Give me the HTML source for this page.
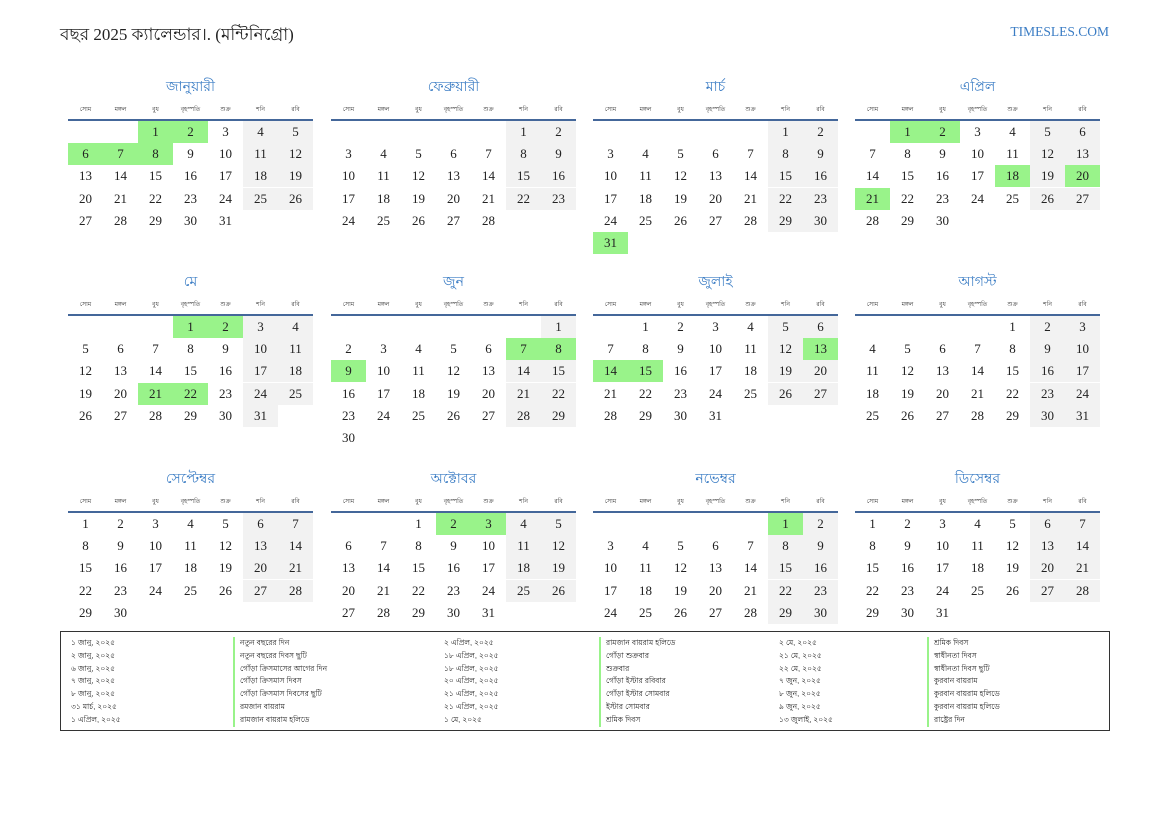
<!DOCTYPE html>
<html><head><meta charset="utf-8">
<style>
html,body{margin:0;padding:0;background:#fff;}
body{width:1169px;height:827px;position:relative;overflow:hidden;font-family:"Liberation Serif",serif;color:#222;}
.title{position:absolute;left:60px;top:22px;font-size:17px;color:#222;white-space:nowrap;}
.site{position:absolute;right:60px;top:24px;font-size:13.5px;color:#3a7cc4;}
.month{position:absolute;width:245px;}
.mname{position:absolute;left:0;width:245px;text-align:center;font-size:14px;color:#3a7cc4;font-family:"Liberation Sans",sans-serif;}
.wd{position:absolute;width:35px;text-align:center;font-size:6px;color:#333;font-family:"Liberation Sans",sans-serif;}
.line{position:absolute;left:0;width:245px;height:2px;background:#44679a;}
.c{position:absolute;width:35px;height:22px;line-height:22px;text-align:center;font-size:13px;}
.g{background:#f2f2f2;}
.h{background:#99f38a;}
.legend{position:absolute;left:60px;top:631px;width:1048px;height:98px;border:1.5px solid #333;font-family:"Liberation Sans",sans-serif;font-size:7.5px;color:#222;}
.lc{position:absolute;top:5px;line-height:12.8px;white-space:nowrap;}
.lb{border-left:2px solid #99f38a;padding-left:5px;}
</style></head><body>
<div class="title">বছর 2025 ক্যালেন্ডার।. (মন্টিনিগ্রো)</div>
<div class="site">TIMESLES.COM</div>
<div id="cal"></div>
<div class="legend">
<div class="lc" style="left:10px">১ জানু, ২০২৫<br>২ জানু, ২০২৫<br>৬ জানু, ২০২৫<br>৭ জানু, ২০২৫<br>৮ জানু, ২০২৫<br>৩১ মার্চ, ২০২৫<br>১ এপ্রিল, ২০২৫</div>
<div class="lc lb" style="left:172px">নতুন বছরের দিন<br>নতুন বছরের দিবস ছুটি<br>গোঁড়া ক্রিসমাসের আগের দিন<br>গোঁড়া ক্রিসমাস দিবস<br>গোঁড়া ক্রিসমাস দিবসের ছুটি<br>রমজান বায়রাম<br>রামজান বায়রাম হলিডে</div>
<div class="lc" style="left:383px">২ এপ্রিল, ২০২৫<br>১৮ এপ্রিল, ২০২৫<br>১৮ এপ্রিল, ২০২৫<br>২০ এপ্রিল, ২০২৫<br>২১ এপ্রিল, ২০২৫<br>২১ এপ্রিল, ২০২৫<br>১ মে, ২০২৫</div>
<div class="lc lb" style="left:538px">রামজান বায়রাম হলিডে<br>গোঁড়া শুক্রবার<br>শুক্রবার<br>গোঁড়া ইস্টার রবিবার<br>গোঁড়া ইস্টার সোমবার<br>ইস্টার সোমবার<br>শ্রমিক দিবস</div>
<div class="lc" style="left:718px">২ মে, ২০২৫<br>২১ মে, ২০২৫<br>২২ মে, ২০২৫<br>৭ জুন, ২০২৫<br>৮ জুন, ২০২৫<br>৯ জুন, ২০২৫<br>১৩ জুলাই, ২০২৫</div>
<div class="lc lb" style="left:866px">শ্রমিক দিবস<br>স্বাধীনতা দিবস<br>স্বাধীনতা দিবস ছুটি<br>কুরবান বায়রাম<br>কুরবান বায়রাম হলিডে<br>কুরবান বায়রাম হলিডে<br>রাষ্ট্রের দিন</div>
</div>
<script>
var names=["জানুয়ারী","ফেব্রুয়ারী","মার্চ","এপ্রিল","মে","জুন","জুলাই","আগস্ট","সেপ্টেম্বর","অক্টোবর","নভেম্বর","ডিসেম্বর"];
var wds=["সোম","মঙ্গল","বুধ","বৃহস্পতি","শুক্র","শনি","রবি"];
var start=[2,5,5,1,3,6,1,4,0,2,5,0];
var len=[31,28,31,30,31,30,31,31,30,31,30,31];
var hol={0:[1,2,6,7,8],2:[31],3:[1,2,18,20,21],4:[1,2,21,22],5:[7,8,9],6:[13,14,15],9:[2,3],10:[1]};
var xs=[68,331,593,855],lines=[120,315,512];
var h="";
for(var m=0;m<12;m++){
 var x=xs[m%4],ly=lines[Math.floor(m/4)];
 h+='<div class="month" style="left:'+x+'px;top:0">';
 h+='<div class="mname" style="top:'+(ly-45)+'px">'+names[m]+'</div>';
 for(var i=0;i<7;i++)h+='<div class="wd" style="left:'+(i*35)+'px;top:'+(ly-16)+'px">'+wds[i]+'</div>';
 h+='<div class="line" style="top:'+(ly-1)+'px"></div>';
 for(var d=1;d<=len[m];d++){
  var p=start[m]+d-1,col=p%7,row=Math.floor(p/7);
  var cls="c";
  if(hol[m]&&hol[m].indexOf(d)>=0)cls+=" h";else if(col>=5)cls+=" g";
  h+='<div class="'+cls+'" style="left:'+(col*35)+'px;top:'+(ly+1+row*22.2)+'px">'+d+'</div>';
 }
 h+='</div>';
}
document.getElementById("cal").innerHTML=h;
</script>
</body></html>
